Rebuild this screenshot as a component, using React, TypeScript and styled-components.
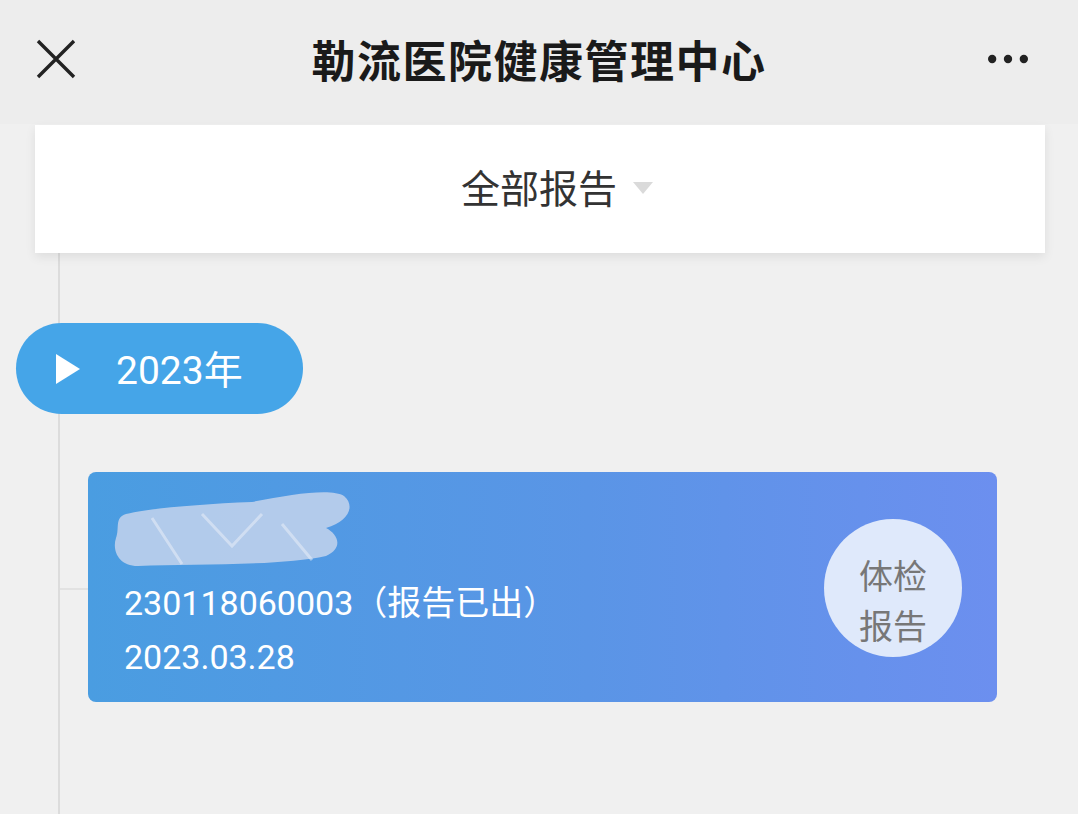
import React from 'react'
import styled, { createGlobalStyle } from 'styled-components'

const GlobalStyle = createGlobalStyle`
  html, body {
    margin: 0;
    padding: 0;
    background: #f0f0f0;
    font-family: Roboto, "Noto Sans CJK SC", sans-serif;
  }
`

const Page = styled.div`
  width: 1078px;
  height: 814px;
  overflow: hidden;
  background: #f0f0f0;
  display: flex;
  flex-direction: column;
`

const Header = styled.div`
  height: 124px;
  flex-shrink: 0;
  background: #ededed;
  display: flex;
  align-items: center;
  justify-content: space-between;
  padding: 0 50px 6px 36px;
  box-sizing: border-box;
`

const Title = styled.h1`
  margin: 0 0 0 14px;
  font-size: 44px;
  font-weight: 700;
  color: #1a1a1a;
  font-family: "Noto Sans CJK SC", sans-serif;
  letter-spacing: 1.5px;
`

const IconButton = styled.div`
  width: 40px;
  height: 40px;
  display: flex;
  align-items: center;
  justify-content: center;
`

const Body = styled.div`
  flex: 1;
  position: relative;
  display: flex;
  flex-direction: column;
`

const Timeline = styled.div`
  position: absolute;
  left: 58px;
  top: 8px;
  bottom: 0;
  width: 2px;
  background: #dcdcdc;
`

const FilterBar = styled.div`
  position: relative;
  z-index: 2;
  margin: 1px 33px 0 35px;
  height: 128px;
  background: #fff;
  box-shadow: 0 4px 10px rgba(0, 0, 0, 0.08);
  display: flex;
  align-items: center;
  justify-content: center;
  gap: 16px;
  font-family: "Noto Sans CJK SC", sans-serif;
  font-size: 39px;
  color: #333;
  padding: 0 0 6px 34px;
  box-sizing: border-box;
`

const Caret = styled.span`
  width: 0;
  height: 0;
  border-left: 10px solid transparent;
  border-right: 10px solid transparent;
  border-top: 12px solid #dadada;
  margin-top: 4px;
`

const YearPill = styled.div`
  position: relative;
  z-index: 1;
  margin: 70px 0 0 16px;
  width: 287px;
  height: 91px;
  border-radius: 46px;
  background: #45a5e8;
  display: flex;
  align-items: center;
  padding: 0 0 4px 40px;
  box-sizing: border-box;
  gap: 36px;
  color: #fff;
  font-size: 39px;
  font-family: Roboto, "Noto Sans CJK SC", sans-serif;
`

const PlayIcon = styled.span`
  width: 0;
  height: 0;
  margin-top: 4px;
  border-top: 15px solid transparent;
  border-bottom: 15px solid transparent;
  border-left: 24px solid #fff;
`

const ReportRow = styled.div`
  position: relative;
  z-index: 1;
  margin: 58px 0 0 60px;
  display: flex;
  align-items: center;
`

const Connector = styled.div`
  width: 28px;
  height: 2px;
  background: #e2e2e2;
  margin-top: 4px;
`

const Card = styled.div`
  width: 909px;
  height: 230px;
  border-radius: 8px;
  background: linear-gradient(90deg, #4a9de1 0%, #5a95e6 55%, #6c8fef 100%);
  display: flex;
  align-items: center;
  justify-content: space-between;
  padding: 0 35px 0 36px;
  box-sizing: border-box;
`

const CardInfo = styled.div`
  align-self: flex-start;
  display: flex;
  flex-direction: column;
  color: #fff;
  font-family: Roboto, "Noto Sans CJK SC", sans-serif;
  font-size: 34px;
  padding-top: 12px;
`

const NameMask = styled.div`
  height: 92px;
  margin-left: -12px;
`

const InfoLine = styled.div`
  line-height: 54px;
`

const Badge = styled.div`
  width: 138px;
  height: 138px;
  border-radius: 50%;
  background: #dfe9fb;
  color: #777;
  font-family: "Noto Sans CJK SC", sans-serif;
  font-size: 34px;
  line-height: 50px;
  display: flex;
  align-items: center;
  justify-content: center;
  text-align: center;
  padding-top: 24px;
  box-sizing: border-box;
  margin-top: 1px;
`

export default function App() {
  return (
    <Page>
      <GlobalStyle />
      <Header>
        <IconButton>
          <svg width="40" height="40" viewBox="0 0 40 40">
            <path d="M2 2 L38 38 M38 2 L2 38" stroke="#222" strokeWidth="3.4" fill="none" />
          </svg>
        </IconButton>
        <Title>勒流医院健康管理中心</Title>
        <IconButton>
          <svg width="48" height="12" viewBox="0 0 48 12">
            <circle cx="5" cy="6" r="5" fill="#222" />
            <circle cx="24" cy="6" r="5" fill="#222" />
            <circle cx="43" cy="6" r="5" fill="#222" />
          </svg>
        </IconButton>
      </Header>
      <Body>
        <Timeline />
        <FilterBar>
          全部报告
          <Caret />
        </FilterBar>
        <YearPill>
          <PlayIcon />
          2023年
        </YearPill>
        <ReportRow>
          <Connector />
          <Card>
            <CardInfo>
              <NameMask>
                <svg width="240" height="92" viewBox="0 0 240 92">
                  <path
                    d="M14 30 C40 24 90 20 140 18 C180 10 220 4 232 12 C244 22 236 38 214 44 C226 50 232 64 214 72 C170 82 80 80 26 82 C6 82 0 66 4 54 C8 44 2 34 14 30 Z"
                    fill="#c4d3ec"
                    opacity="0.85"
                  />
                  <path d="M40 34 L70 80 M90 30 L120 62 L150 30 M170 40 L200 76" stroke="#eef2fa" strokeWidth="3" opacity="0.5" fill="none" />
                </svg>
              </NameMask>
              <InfoLine>230118060003（报告已出）</InfoLine>
              <InfoLine>2023.03.28</InfoLine>
            </CardInfo>
            <Badge>
              体检
              <br />
              报告
            </Badge>
          </Card>
        </ReportRow>
      </Body>
    </Page>
  )
}
